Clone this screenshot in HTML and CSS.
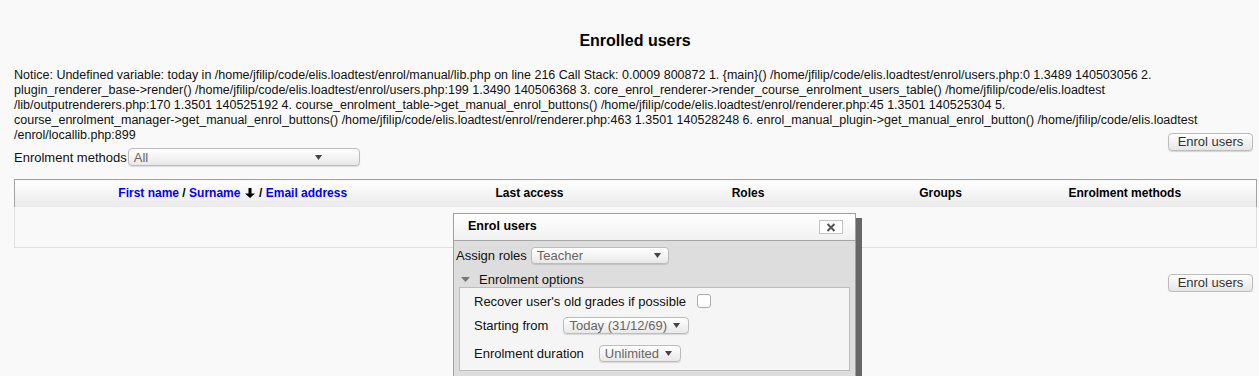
FILE: index.html
```html
<!DOCTYPE html>
<html lang="en">
<head>
    <meta charset="UTF-8">
    <title>Enrolled users</title>
    <link rel="stylesheet" href="styles.css">
</head>
<body>

<!-- Main page -->
<div class="page">
    <h2 class="page-title">Enrolled users</h2>

    <div class="notice">
        Notice: Undefined variable: today in /home/jfilip/code/elis.loadtest/enrol/manual/lib.php on line 216 Call Stack: 0.0009 800872 1. {main}() /home/jfilip/code/elis.loadtest/enrol/users.php:0 1.3489 140503056 2.<br>
        plugin_renderer_base-&gt;render() /home/jfilip/code/elis.loadtest/enrol/users.php:199 1.3490 140506368 3. core_enrol_renderer-&gt;render_course_enrolment_users_table() /home/jfilip/code/elis.loadtest<br>
        /lib/outputrenderers.php:170 1.3501 140525192 4. course_enrolment_table-&gt;get_manual_enrol_buttons() /home/jfilip/code/elis.loadtest/enrol/renderer.php:45 1.3501 140525304 5.<br>
        course_enrolment_manager-&gt;get_manual_enrol_buttons() /home/jfilip/code/elis.loadtest/enrol/renderer.php:463 1.3501 140528248 6. enrol_manual_plugin-&gt;get_manual_enrol_button() /home/jfilip/code/elis.loadtest<br>
        /enrol/locallib.php:899
    </div>

    <div class="controls">
        <div class="filter">
            <span class="label">Enrolment methods</span>
            <span class="select select-methods">
                <span>All</span>
                <svg class="caret" width="7" height="5" viewBox="0 0 7 5"><path d="M0 0h7L3.5 5z"/></svg>
            </span>
        </div>
        <button class="btn btn-top">Enrol users</button>
    </div>

    <table class="users">
        <colgroup>
            <col style="width:436px">
            <col style="width:158px">
            <col style="width:279px">
            <col style="width:106px">
            <col style="width:263px">
        </colgroup>
        <thead>
            <tr>
                <th>
                    <a href="#">First name</a> / <a href="#">Surname</a>
                    <svg class="sort" width="10" height="10" viewBox="0 0 10 10"><path d="M3.5 0h3v5.5H10L5 10 0 5.5h3.5z"/></svg>
                    / <a href="#">Email address</a>
                </th>
                <th>Last access</th>
                <th>Roles</th>
                <th>Groups</th>
                <th>Enrolment methods</th>
            </tr>
        </thead>
        <tbody>
            <tr><td colspan="5"></td></tr>
        </tbody>
    </table>

    <div class="bottom-bar">
        <button class="btn">Enrol users</button>
    </div>
</div>

<!-- Enrol users dialog -->
<div class="dialog">
    <div class="dialog-head">
        <span class="dialog-title">Enrol users</span>
        <span class="close">
            <svg width="10" height="9" viewBox="0 0 10 9"><path d="M1.5 1l7 7M8.5 1l-7 7" stroke="#555" stroke-width="2"/></svg>
        </span>
    </div>
    <div class="dialog-body">
        <div class="roles-row">
            <span class="label">Assign roles</span>
            <span class="select select-roles">
                <span>Teacher</span>
                <svg class="caret" width="7" height="5" viewBox="0 0 7 5"><path d="M0 0h7L3.5 5z"/></svg>
            </span>
        </div>
        <div class="options-toggle">
            <svg width="9" height="5" viewBox="0 0 9 5"><path d="M0 0h9L4.5 5z" fill="#777"/></svg>
            <span>Enrolment options</span>
        </div>
        <div class="options">
            <div class="option">
                <span class="label">Recover user's old grades if possible</span>
                <span class="checkbox"></span>
            </div>
            <div class="option">
                <span class="label">Starting from</span>
                <span class="select">
                    <span>Today (31/12/69)</span>
                    <svg class="caret" width="7" height="5" viewBox="0 0 7 5"><path d="M0 0h7L3.5 5z"/></svg>
                </span>
            </div>
            <div class="option option-last">
                <span class="label">Enrolment duration</span>
                <span class="select">
                    <span>Unlimited</span>
                    <svg class="caret" width="7" height="5" viewBox="0 0 7 5"><path d="M0 0h7L3.5 5z"/></svg>
                </span>
            </div>
        </div>
    </div>
</div>

</body>
</html>
```

FILE: styles.css
```css
* {
    box-sizing: border-box;
}

body {
    margin: 0;
    padding: 0;
    background-color: #f9f9f9;
    font-family: 'Liberation Sans', Arial, sans-serif;
    font-size: 13px;
    color: #111;
    overflow: hidden;
}

.page {
    padding: 0 3px 0 14px;
}

.page-title {
    margin: 31px 0 0 0;
    height: 20px;
    line-height: 20px;
    font-size: 16px;
    font-weight: bold;
    text-align: center;
    color: #000;
}

.notice {
    margin-top: 17px;
    font-size: 12.5px;
    line-height: 15px;
    white-space: nowrap;
}

.controls {
    display: flex;
    justify-content: space-between;
    align-items: flex-start;
}

.filter {
    display: flex;
    align-items: center;
    padding-top: 5px;
}

.select {
    display: inline-flex;
    align-items: center;
    gap: 6px;
    height: 17px;
    padding: 0 8px 0 5px;
    border: 1px solid #bcbcbc;
    border-radius: 4px;
    background: linear-gradient(#ffffff, #e8e8e8);
    box-shadow: 0 1px 1px rgba(0,0,0,0.12);
    color: #666;
    line-height: 15px;
    white-space: nowrap;
}

.caret {
    fill: #444;
    flex: none;
}

.select-methods {
    width: 232px;
    height: 18px;
    margin-left: 1px;
    padding-right: 37px;
}

.select-methods .caret,
.select-roles .caret {
    margin-left: auto;
}

.select-roles {
    width: 138px;
    margin-left: 4px;
    padding-right: 7px;
}

.btn {
    height: 18px;
    width: 85px;
    padding: 0;
    border: 1px solid #bcbcbc;
    border-radius: 4px;
    background: linear-gradient(#ffffff, #e6e6e6);
    box-shadow: 0 1px 1px rgba(0,0,0,0.15);
    font-family: 'Liberation Sans', Arial, sans-serif;
    font-size: 13px;
    color: #333;
    line-height: 16px;
}

.btn-top {
    margin-top: -10px;
    margin-right: 3px;
}

/* participants table */

.users {
    margin-top: 13px;
    width: 1242px;
    table-layout: fixed;
    border-collapse: collapse;
}

.users th {
    height: 27px;
    padding: 0;
    border-top: 1px solid #a3a3a3;
    background: linear-gradient(#ffffff, #e9e9e9);
    font-size: 12px;
    font-weight: bold;
    color: #000;
    text-align: center;
}

.users th:first-child {
    border-left: 1px solid #a3a3a3;
}

.users th:last-child {
    border-right: 1px solid #a3a3a3;
}

.users th a {
    color: #0000ff;
    text-decoration: none;
}

.sort {
    vertical-align: -1px;
    margin: 0 1px;
}

.users td {
    height: 41px;
    border: 1px solid #e0e0e0;
    border-top: none;
    background: #f9f9f9;
}

.bottom-bar {
    display: flex;
    justify-content: flex-end;
    margin-top: 26px;
    padding-right: 3px;
}

/* dialog */

.dialog {
    position: absolute;
    left: 453px;
    top: 213px;
    width: 403px;
    border: 1px solid #a0a0a0;
    background: #dddddd;
    box-shadow: 6px 5px 0 0 #676767;
}

.dialog-head {
    display: flex;
    align-items: center;
    justify-content: space-between;
    height: 27px;
    padding: 0 12px 0 14px;
    border-bottom: 1px solid #a6a6a6;
    background: linear-gradient(#ffffff, #f1f1f1);
}

.dialog-title {
    font-weight: bold;
    font-size: 12.5px;
    color: #000;
    margin-top: -2px;
}

.close {
    display: flex;
    align-items: center;
    justify-content: center;
    width: 24px;
    height: 14px;
    border: 1px solid #c4c4c4;
    background: #fff;
}

.dialog-body {
    padding: 6px 5px 12px 2px;
}

.roles-row {
    display: flex;
    align-items: center;
}

.options-toggle {
    display: flex;
    align-items: center;
    gap: 9px;
    height: 14px;
    margin-top: 8px;
    padding-left: 5px;
}

.options {
    margin: 1px 0 0 3px;
    padding: 6px 14px 8px 14px;
    border: 1px solid #bcbcbc;
    background: #f5f5f5;
}

.option {
    display: flex;
    align-items: center;
    height: 14px;
    margin-bottom: 9px;
}

.option:nth-child(2) {
    height: 17px;
    margin-bottom: 11px;
}

.option-last {
    height: 17px;
    margin-bottom: 0;
}

.option .label {
    margin-right: 15px;
}

.option:first-child .label {
    margin-right: 11px;
}

.checkbox {
    width: 14px;
    height: 14px;
    border: 1px solid #adadad;
    border-radius: 3px;
    background: #fff;
}
```
